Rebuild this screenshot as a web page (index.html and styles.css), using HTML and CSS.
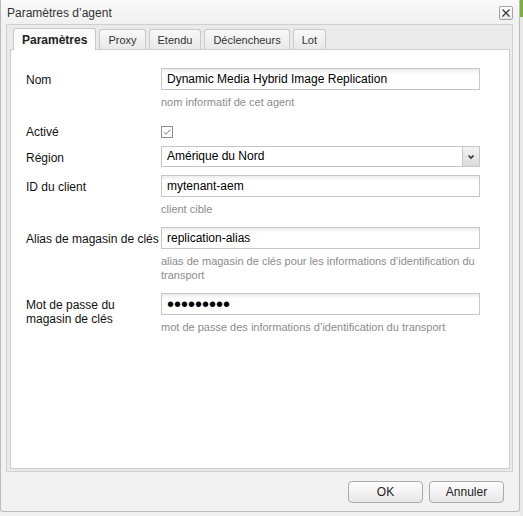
FILE: index.html
```html
<!DOCTYPE html>
<html lang="fr">
<head>
<meta charset="utf-8">
<title>Paramètres d’agent</title>
<link rel="stylesheet" href="styles.css">
</head>
<body>
<div class="screen">
  <div class="dialog">
    <div class="titlebar">
      <span class="title">Paramètres d’agent</span>
      <button class="close" type="button" aria-label="Fermer">
        <svg width="10" height="10" viewBox="0 0 10 10"><path d="M1.5 1.5L8.5 8.5M8.5 1.5L1.5 8.5" stroke="#333" stroke-width="1.2" fill="none"/></svg>
      </button>
    </div>
    <div class="tabpanel">
      <div class="tabs">
        <div class="tab active">Paramètres</div>
        <div class="tab">Proxy</div>
        <div class="tab">Etendu</div>
        <div class="tab">Déclencheurs</div>
        <div class="tab">Lot</div>
      </div>
      <div class="content">
        <div class="form">
          <div class="field">
            <label class="label">Nom</label>
            <div class="control">
              <input class="input" type="text" value="Dynamic Media Hybrid Image Replication">
              <div class="hint">nom informatif de cet agent</div>
            </div>
          </div>
          <div class="field field-check">
            <label class="label">Activé</label>
            <div class="control">
              <span class="checkbox">
                <svg width="12" height="12" viewBox="0 0 12 12"><rect x="0.5" y="0.5" width="11" height="11" fill="#fff" stroke="#8e8e8e"/><path d="M2.8 6.2L5 8.3L9.3 3.6" stroke="#7a7a7a" stroke-width="1" fill="none"/></svg>
              </span>
            </div>
          </div>
          <div class="field field-choice">
            <label class="label">Région</label>
            <div class="control">
              <div class="select">
                <span class="select-value">Amérique du Nord</span>
                <span class="select-arrow">
                  <svg width="8" height="6" viewBox="0 0 8 6"><path d="M1.5 1.5L4 4L6.5 1.5" stroke="#333" stroke-width="1.6" fill="none"/></svg>
                </span>
              </div>
            </div>
          </div>
          <div class="field">
            <label class="label">ID du client</label>
            <div class="control">
              <input class="input" type="text" value="mytenant-aem">
              <div class="hint">client cible</div>
            </div>
          </div>
          <div class="field">
            <label class="label">Alias de magasin de clés</label>
            <div class="control">
              <input class="input" type="text" value="replication-alias">
              <div class="hint">alias de magasin de clés pour les informations d’identification du transport</div>
            </div>
          </div>
          <div class="field">
            <label class="label">Mot de passe du magasin de clés</label>
            <div class="control">
              <input class="input input-password" type="password" value="secret123">
              <div class="hint">mot de passe des informations d’identification du transport</div>
            </div>
          </div>
        </div>
      </div>
    </div>
    <div class="footer">
      <button class="btn" type="button">OK</button>
      <button class="btn" type="button">Annuler</button>
    </div>
  </div>
  <div class="backdrop">
    <div class="backdrop-top"></div>
    <div class="backdrop-body"></div>
  </div>
</div>
</body>
</html>
```

FILE: styles.css
```css
* { box-sizing: border-box; }

html, body {
  margin: 0;
  padding: 0;
}

body {
  width: 523px;
  height: 516px;
  overflow: hidden;
  background: #f0f0f0;
  font-family: "Liberation Sans", Arial, sans-serif;
  font-size: 12px;
  color: #222;
}

.screen {
  display: flex;
  align-items: flex-start;
  height: 516px;
}

.dialog {
  width: 520px;
  height: 512px;
  flex: none;
  display: flex;
  flex-direction: column;
  background: #f2f2f2;
  border: 1px solid #bcbcbc;
  border-top: none;
  border-radius: 0 0 3px 3px;
}

.titlebar {
  height: 24px;
  flex: none;
  display: flex;
  align-items: center;
  justify-content: space-between;
  padding: 1px 6px 0;
  background: linear-gradient(#fafafa, #f0f0f0);
}

.title {
  font-size: 12px;
  color: #333;
}

.close {
  width: 14px;
  height: 14px;
  padding: 0;
  border: 1px solid #a3a3a3;
  border-radius: 2px;
  background: linear-gradient(#ffffff, #e9e9e9);
  display: flex;
  align-items: center;
  justify-content: center;
}

.tabpanel {
  flex: none;
  height: 448px;
  margin: 0 6px 0 5px;
  border: 1px solid #d0d0d0;
  background: #eaeaea;
  padding: 0 2px 2px 3px;
  display: flex;
  flex-direction: column;
}

.tabs {
  height: 24px;
  flex: none;
  display: flex;
  align-items: flex-end;
  gap: 3px;
  padding-left: 3px;
  position: relative;
  z-index: 1;
}

.tab {
  height: 20px;
  padding: 1px 8px 0;
  border: 1px solid #c8c8c8;
  border-bottom: none;
  border-radius: 3px 3px 0 0;
  background: linear-gradient(#f8f8f8, #e9e9e9);
  display: flex;
  align-items: center;
  font-size: 11px;
  color: #333;
}

.tab.active {
  height: 22px;
  margin-bottom: -1px;
  background: linear-gradient(#f9f9f9, #ffffff);
  font-size: 12px;
  font-weight: bold;
  color: #222;
}

.content {
  flex: 1;
  background: #fff;
  border: 1px solid #cdcdcd;
  padding: 18px 0 0 15px;
}

.form {
  display: flex;
  flex-direction: column;
}

.field {
  display: grid;
  grid-template-columns: 135px 319px;
  margin-bottom: 11px;
}

.field-check {
  height: 22px;
  margin-bottom: 4px;
}

.field-choice {
  margin-bottom: 8px;
}

.label {
  padding: 5px 2px 0 0;
  line-height: 14px;
  color: #111;
}

.input {
  display: block;
  width: 100%;
  height: 22px;
  margin: 0;
  border: 1px solid #c6c6c6;
  border-radius: 0;
  padding: 0 5px;
  font-family: "Liberation Sans", Arial, sans-serif;
  font-size: 12px;
  color: #000;
  background: linear-gradient(#ececec, #ffffff 5px);
  outline: none;
}

.input-password {
  font-size: 20px;
  letter-spacing: 0;
}

.hint {
  margin-top: 5px;
  font-size: 11px;
  line-height: 14px;
  color: #8c8c8c;
}

.checkbox {
  display: block;
  width: 12px;
  height: 12px;
  margin-top: 6px;
}

.checkbox svg {
  display: block;
}

.select {
  display: flex;
  height: 21px;
  border: 1px solid #c6c6c6;
  background: #fff;
}

.select-value {
  flex: 1;
  padding-left: 5px;
  line-height: 19px;
  color: #000;
}

.select-arrow {
  width: 17px;
  flex: none;
  border-left: 1px solid #c6c6c6;
  background: linear-gradient(#f5f5f5, #dadada);
  display: flex;
  align-items: center;
  justify-content: center;
}

.footer {
  flex: 1;
  display: flex;
  justify-content: flex-end;
  align-items: flex-start;
  gap: 6px;
  padding: 9px 15px 0 0;
}

.btn {
  width: 75px;
  height: 22px;
  padding: 0;
  border: 1px solid #ababab;
  border-radius: 4px;
  background: linear-gradient(#fdfdfd, #e8e8e8);
  font-family: "Liberation Sans", Arial, sans-serif;
  font-size: 12px;
  color: #222;
}

.backdrop {
  flex: 1;
  height: 516px;
  display: flex;
  flex-direction: column;
}

.backdrop-top {
  height: 17px;
  background: #78b03a;
}

.backdrop-body {
  flex: 1;
  background: #e9e9e9;
}
```
